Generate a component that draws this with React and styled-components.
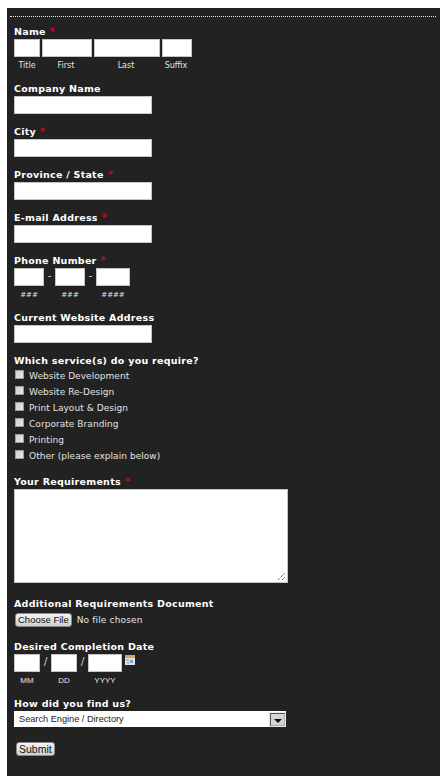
import React from "react";
import styled, { createGlobalStyle } from "styled-components";

const Global = createGlobalStyle`
  html, body { margin: 0; padding: 0; background: #fff; }
  body { font-family: "DejaVu Sans", Verdana, sans-serif; height: 776px; overflow: hidden; }
`;

const Panel = styled.div`
  width: 433px;
  height: 768px;
  margin: 8px 0 0 7px;
  background: #222222;
  box-sizing: border-box;
  padding-top: 8px;
  overflow: hidden;
`;

const Rule = styled.div`
  margin: 0 4px 0 3px;
  border-top: 1px dotted #e8e8e8;
`;

const Form = styled.form`
  display: flex;
  flex-direction: column;
  padding: 7px 0 0 7px;
`;

const Field = styled.div`
  display: flex;
  flex-direction: column;
  height: ${(p) => p.$h}px;
`;

const Label = styled.div`
  height: 15px;
  line-height: 15px;
  font-size: 9.5px;
  font-weight: bold;
  letter-spacing: 0.27px;
  color: #fff;
  white-space: nowrap;
`;

const Req = styled.span`
  color: #b01030;
  margin-left: 4px;
  font-size: 10px;
`;

const Row = styled.div`
  display: flex;
  align-items: flex-start;
`;

const Input = styled.div`
  width: ${(p) => p.$w}px;
  height: 18px;
  margin-right: ${(p) => p.$mr || 0}px;
  background: #fff;
  border: 1px solid #c4c4c4;
  box-sizing: border-box;
  flex: none;
`;

const Sep = styled.span`
  width: ${(p) => p.$w}px;
  text-align: center;
  color: #ccc;
  font: 11px/16px "DejaVu Sans", sans-serif;
  flex: none;
`;

const SubRow = styled.div`
  display: flex;
  margin-top: 4px;
`;

const Sub = styled.span`
  width: ${(p) => p.$w}px;
  flex: none;
  text-align: center;
  font-size: ${(p) => p.$fs || 8}px;
  font-family: ${(p) => p.$arial ? '"Liberation Sans", Arial, sans-serif' : '"DejaVu Sans", sans-serif'};
  font-style: ${(p) => p.$italic ? "italic" : "normal"};
  line-height: 10px;
  color: #e4e4e4;
`;

const CheckList = styled.div`
  display: flex;
  flex-direction: column;
`;

const CheckRow = styled.div`
  display: flex;
  align-items: center;
  height: 16px;
  font-size: 9px;
  letter-spacing: 0.05px;
  color: #e2e2e2;
`;

const Box = styled.span`
  width: 9px;
  height: 9px;
  margin: -3px 5px 0 1px;
  background: linear-gradient(135deg, #cfcfcf, #e6e6e6);
  border: 1px solid #9a9a9a;
  box-sizing: border-box;
  flex: none;
`;

const TextArea = styled.div`
  position: relative;
  width: 274px;
  height: 94px;
  background: #fff;
  border: 1px solid #c4c4c4;
  box-sizing: border-box;
`;

const Grip = styled.svg`
  position: absolute;
  right: 1px;
  bottom: 1px;
`;

const FileRow = styled.div`
  display: flex;
  align-items: center;
  height: 16px;
  margin-top: 1px;
  margin-left: 1px;
`;

const Btn = styled.button`
  height: 14px;
  padding: 0 ${(p) => p.$px || 2}px;
  margin: 0;
  font: ${(p) => p.$fs || 9.5}px/12px "Liberation Sans", Arial, sans-serif;
  color: #111;
  background: linear-gradient(#f4f4f4, #cfcfcf);
  border: 1px solid #8a8a8a;
  border-radius: 3px;
`;

const FileText = styled.span`
  margin-left: 5px;
  font-size: 9px;
  letter-spacing: 0.15px;
  color: #e4e4e4;
`;

const Calendar = styled.svg`
  margin: 1px 0 0 3px;
  flex: none;
`;

const Select = styled.div`
  display: flex;
  align-items: center;
  justify-content: space-between;
  width: 272px;
  height: 16px;
  background: #fff;
  box-sizing: border-box;
  padding: 0 0 0 5px;
  font: 9.2px/16px "Liberation Sans", Arial, sans-serif;
  color: #222;
`;

const Arrow = styled.span`
  display: flex;
  align-items: flex-end;
  justify-content: center;
  width: 17px;
  height: 15px;
  box-sizing: border-box;
  padding-bottom: 3px;
  background: #d4d4d4;
  border: 1px solid #e8e8e8;
  box-shadow: inset 1px 1px 0 #555, inset -1px -1px 0 #aaa;
  &::after {
    content: "";
    border-left: 4px solid transparent;
    border-right: 4px solid transparent;
    border-top: 4px solid #111;
  }
`;

const SubmitWrap = styled.div`
  margin: 15px 0 0 2px;
  display: flex;
`;

const services = [
  "Website Development",
  "Website Re-Design",
  "Print Layout & Design",
  "Corporate Branding",
  "Printing",
  "Other (please explain below)",
];

const Simple = ({ label, req }) => (
  <Field $h={43}>
    <Label>{label}{req && <Req>*</Req>}</Label>
    <Input $w={138} />
  </Field>
);

export default function App() {
  return (
    <>
      <Global />
      <Panel>
        <Rule />
        <Form>
          <Field $h={57}>
            <Label>Name<Req>*</Req></Label>
            <Row>
              <Input $w={26} $mr={2} />
              <Input $w={50} $mr={2} />
              <Input $w={66} $mr={2} />
              <Input $w={30} />
            </Row>
            <SubRow>
              <Sub $w={26}>Title</Sub>
              <Sub $w={52}>First</Sub>
              <Sub $w={68}>Last</Sub>
              <Sub $w={32}>Suffix</Sub>
            </SubRow>
          </Field>
          <Simple label="Company Name" />
          <Simple label="City" req />
          <Simple label="Province / State" req />
          <Simple label="E-mail Address" req />
          <Field $h={57}>
            <Label>Phone Number<Req>*</Req></Label>
            <Row>
              <Input $w={30} />
              <Sep $w={11}>-</Sep>
              <Input $w={30} />
              <Sep $w={11}>-</Sep>
              <Input $w={34} />
            </Row>
            <SubRow>
              <Sub $w={30} $italic $fs={7}>###</Sub>
              <Sub $w={11} />
              <Sub $w={30} $italic $fs={7}>###</Sub>
              <Sub $w={11} />
              <Sub $w={34} $italic $fs={7}>####</Sub>
            </SubRow>
          </Field>
          <Simple label="Current Website Address" />
          <Field $h={121}>
            <Label>Which service(s) do you require?</Label>
            <CheckList>
              {services.map((s) => (
                <CheckRow key={s}><Box />{s}</CheckRow>
              ))}
            </CheckList>
          </Field>
          <Field $h={122}>
            <Label>Your Requirements<Req>*</Req></Label>
            <TextArea>
              <Grip width="9" height="9" viewBox="0 0 9 9">
                <path d="M1 8 L8 1 M5 8 L8 5" stroke="#555" strokeWidth="1" strokeDasharray="1.4 0.6" fill="none" />
              </Grip>
            </TextArea>
          </Field>
          <Field $h={43}>
            <Label>Additional Requirements Document</Label>
            <FileRow>
              <Btn type="button" $px={2}>Choose File</Btn>
              <FileText>No file chosen</FileText>
            </FileRow>
          </Field>
          <Field $h={57}>
            <Label>Desired Completion Date</Label>
            <Row>
              <Input $w={26} />
              <Sep $w={11}>/</Sep>
              <Input $w={26} />
              <Sep $w={11}>/</Sep>
              <Input $w={34} />
              <Calendar width="10" height="10" viewBox="0 0 10 10">
                <rect width="10" height="10" fill="#d6e3ea" />
                <rect width="10" height="3" fill="#e0a060" />
                <rect x="1" y="4" width="3" height="2" fill="#9db8c8" />
                <rect x="5" y="5" width="3" height="3" fill="#7fa6c0" />
                <rect x="2" y="7" width="2" height="2" fill="#a9c2d0" />
              </Calendar>
            </Row>
            <SubRow>
              <Sub $w={26} $arial>MM</Sub>
              <Sub $w={11} />
              <Sub $w={26} $arial>DD</Sub>
              <Sub $w={11} />
              <Sub $w={34} $arial>YYYY</Sub>
            </SubRow>
          </Field>
          <Field $h={31}>
            <Label>How did you find us?</Label>
            <Select>
              Search Engine / Directory
              <Arrow />
            </Select>
          </Field>
          <SubmitWrap>
            <Btn type="button" $fs={10.5} $px={2}>Submit</Btn>
          </SubmitWrap>
        </Form>
      </Panel>
    </>
  );
}
